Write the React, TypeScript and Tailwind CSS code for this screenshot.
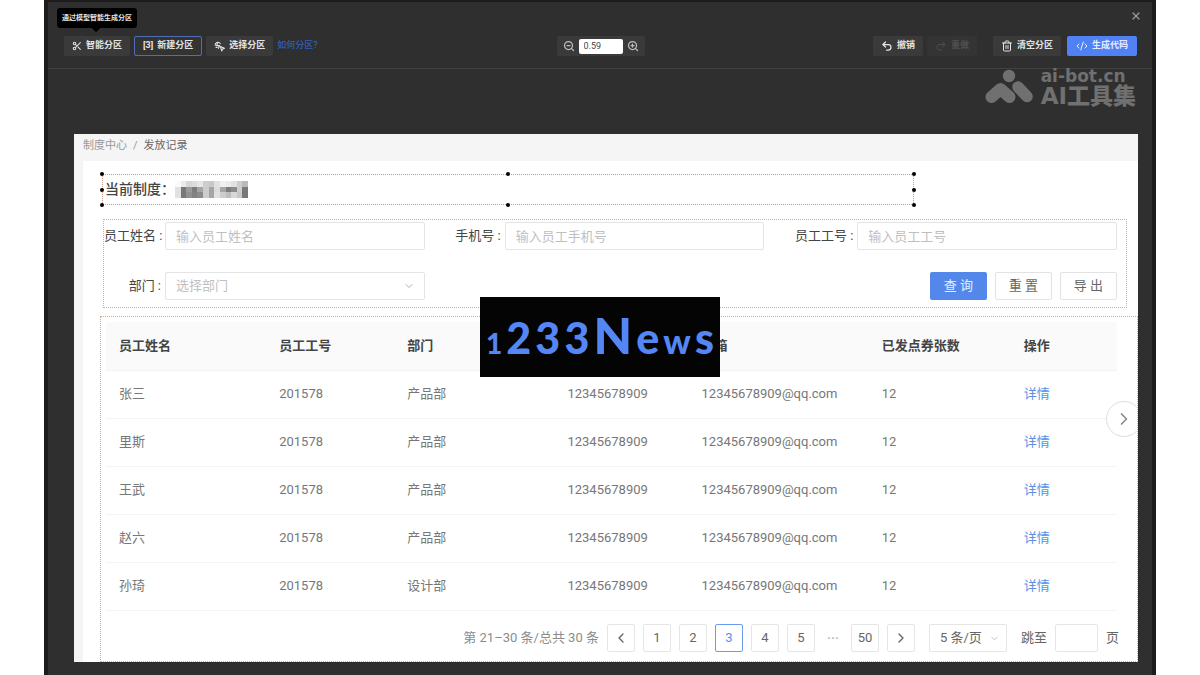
import * as React from 'react';
import { ChevronDown, ChevronLeft, ChevronRight, CodeXml, Redo2, Scissors, Trash2, Undo2, X, ZoomIn, ZoomOut } from 'lucide-react';

const COLUMNS = [
    { key: 'name', title: '员工姓名', width: 'w-[160px]' },
    { key: 'number', title: '员工工号', width: 'w-[128px]' },
    { key: 'department', title: '部门', width: 'w-[160px]' },
    { key: 'phone', title: '', width: 'w-[134px]' },
    { key: 'email', title: '邮箱', width: 'w-[180px]' },
    { key: 'coupons', title: '已发点券张数', width: 'w-[142px]' },
    { key: 'action', title: '操作', width: 'w-[106px]' },
];

const ROWS = [
    { name: '张三', department: '产品部' },
    { name: '里斯', department: '产品部' },
    { name: '王武', department: '产品部' },
    { name: '赵六', department: '产品部' },
    { name: '孙琦', department: '设计部' },
];

const HANDLES = [
    '-left-[3px] -top-[3px]',
    'left-1/2 -ml-[2px] -top-[3px]',
    '-right-[3px] -top-[3px]',
    '-left-[3px] top-1/2 -mt-[2px]',
    '-right-[3px] top-1/2 -mt-[2px]',
    '-left-[3px] -bottom-[3px]',
    'left-1/2 -ml-[2px] -bottom-[3px]',
    '-right-[3px] -bottom-[3px]',
];

// grey levels of the masked policy name, one list per row of blocks
const MASK = [
    [250, 235, 215, 220, 230, 205, 200, 225, 240, 235, 225, 205, 185],
    [225, 120, 155, 125, 165, 205, 165, 220, 165, 125, 140, 205, 120],
    [225, 120, 145, 130, 140, 205, 165, 225, 205, 190, 215, 200, 120],
];

const FIELD = 'h-7 w-full min-w-0 rounded-[2px] border border-[#e4e4e4] bg-white px-[10px] text-[13px] outline-none placeholder:text-[#bfbfbf]';

interface ToolButtonProps {
    children: React.ReactNode;
    className?: string;
    disabled?: boolean;
}

const ToolButton: React.FC<ToolButtonProps> = ({ children, className = 'bg-[#3a3a3a] px-2 text-[#e4e4e4]', disabled = false }) => (
    <button type="button" disabled={disabled} className={`flex h-5 items-center gap-1 rounded-[2px] text-[9px] font-bold whitespace-nowrap ${className}`}>
        {children}
    </button>
);

const SelectIcon = () => (
    <svg viewBox="0 0 12 12" className="size-[11px]" fill="none" stroke="currentColor" strokeWidth="1.2" strokeLinecap="round" strokeLinejoin="round" aria-hidden="true">
        <path d="M3.400 7H2.200M1.300 4.800A3 3 0 0 1 6.800 2.800" />
        <path d="M4.200 1.500L2.800 5h3.400L4.800 8" />
        <path d="M7 6l1.400 4.800 1-2 2-.9z" />
    </svg>
);

const WatermarkLogo = () => (
    <svg viewBox="0 0 48 36" className="h-9 w-12" fill="none" stroke="#707070" strokeWidth="12" strokeLinecap="round" strokeLinejoin="round" aria-hidden="true">
        <circle cx="24" cy="8" r="6.200" fill="#707070" stroke="none" />
        <path d="M6.500 29L15.500 21L24.500 29" />
        <path d="M33 19l9 9.500" strokeWidth="11.500" />
    </svg>
);

const Toolbar = () => (
    <header className="relative grid grid-cols-[1fr_auto_1fr] items-center border-b border-[#414141] pt-[34px] pr-[15px] pb-3 pl-4">
        <div className="flex items-center gap-1">
            <div className="relative">
                <ToolButton>
                    <Scissors className="size-[10px]" strokeWidth={2.5} />
                    智能分区
                </ToolButton>
                <div role="tooltip" className="absolute bottom-7 -left-[7px] flex h-5 items-center rounded-[3px] bg-black px-[5px] text-[7px] font-bold whitespace-nowrap text-[#e4e4e4]">
                    通过模型智能生成分区
                    <span className="absolute top-[17px] left-9 size-[6px] rotate-45 bg-black" />
                </div>
            </div>
            <ToolButton className="border border-[#4f6fb5] bg-[#333] px-2 text-[#e4e4e4]">
                <span>[3]</span>
                新建分区
            </ToolButton>
            <ToolButton>
                <SelectIcon />
                选择分区
            </ToolButton>
            <a href="#help" className="text-[9px] font-medium text-[#2f5fb8]">如何分区?</a>
        </div>

        <div className="flex h-5 items-center gap-1 rounded-[2px] bg-[#3a3a3a] px-[6px] text-[#bdbdbd]">
            <button type="button" aria-label="缩小">
                <ZoomOut className="size-3" strokeWidth={2.5} />
            </button>
            <input aria-label="缩放比例" defaultValue="0.59" className="h-[15px] w-11 rounded-[2px] bg-white px-[5px] text-[9px] text-[#444] outline-none" />
            <button type="button" aria-label="放大">
                <ZoomIn className="size-3" strokeWidth={2.5} />
            </button>
        </div>

        <div className="flex items-center justify-end gap-1">
            <ToolButton>
                <Undo2 className="size-3" strokeWidth={2.5} />
                撤销
            </ToolButton>
            <ToolButton disabled className="bg-[#343434] px-2 text-[#505050]">
                <Redo2 className="size-3" />
                重做
            </ToolButton>
            <div className="ml-3 flex items-center gap-[6px]">
                <ToolButton>
                    <Trash2 className="size-3" />
                    清空分区
                </ToolButton>
                <ToolButton className="bg-[#5182f5] px-[9px] text-[#e6edff]">
                    <CodeXml className="size-3" />
                    生成代码
                </ToolButton>
            </div>
        </div>

        <button type="button" aria-label="关闭" className="absolute top-2 right-[10px] text-[#9a9a9a]">
            <X className="size-3" strokeWidth={2.5} />
        </button>
    </header>
);

const Watermark = () => (
    <div className="absolute top-[66px] right-4 flex items-start gap-2 font-['DejaVu_Sans','Noto_Sans_CJK_SC',sans-serif] font-bold text-[#707070]">
        <WatermarkLogo />
        <div>
            <div className="text-[17px] leading-[17px]">ai-bot.cn</div>
            <div className="text-[23px] leading-[22px] font-black">AI工具集</div>
        </div>
    </div>
);

const PolicyTitle = () => (
    <div className="relative mt-[13px] ml-[19px] flex h-[31px] w-[77%] items-center border border-dotted border-[#c09a8a] pl-[2px]">
        <h1 className="text-[14px] font-medium text-[#444]">当前制度：</h1>
        <svg viewBox="0 0 13 3" preserveAspectRatio="none" shapeRendering="crispEdges" className="h-[17px] w-[73px]" aria-hidden="true">
            {MASK.map((row, y) => row.map((level, x) => (
                <rect key={`${x}-${y}`} x={x} y={y} width="1" height="1" fill={`rgb(${level},${level},${level})`} />
            )))}
        </svg>
        {HANDLES.map((position) => (
            <span key={position} className={`absolute size-1 rounded-full bg-black ${position}`} />
        ))}
    </div>
);

const Filters = () => (
    <form className="mt-[14px] mr-[11px] ml-5 grid grid-cols-[61px_1fr_80px_1fr_93px_1fr] items-center gap-y-[22px] border border-dotted border-[#eda67c] pt-[2px] pr-[9px] pb-[7px] text-[13px] text-[#444]">
        <label htmlFor="name" className="pr-1 text-right whitespace-nowrap">员工姓名 :</label>
        <input id="name" placeholder="输入员工姓名" className={`${FIELD} text-[#555]`} />
        <label htmlFor="phone" className="pr-1 text-right">手机号 :</label>
        <input id="phone" placeholder="输入员工手机号" className={`${FIELD} text-[#555]`} />
        <label htmlFor="number" className="pr-1 text-right">员工工号 :</label>
        <input id="number" placeholder="输入员工工号" className={`${FIELD} text-[#555]`} />
        <label htmlFor="department" className="pr-1 text-right">部门 :</label>
        <div className="relative">
            <select id="department" className={`${FIELD} appearance-none text-[#bfbfbf]`}>
                <option>选择部门</option>
            </select>
            <ChevronDown className="pointer-events-none absolute top-2 right-[10px] size-3 text-[#b0b0b0]" />
        </div>
        <div className="col-span-4 flex justify-end gap-2">
            <button type="button" className="h-7 w-[57px] rounded-[2px] bg-[#5388ea] text-[#e4edff]">查 询</button>
            <button type="button" className="h-7 w-[57px] rounded-[2px] border border-[#e2e2e2] text-[#666]">重 置</button>
            <button type="button" className="h-7 w-[57px] rounded-[2px] border border-[#e2e2e2] text-[#666]">导 出</button>
        </div>
    </form>
);

const PAGE_BUTTON = 'flex size-7 items-center justify-center rounded-[2px] border';

const Pagination = () => (
    <nav aria-label="分页" className="mt-[13px] mr-[18px] mb-[9px] flex items-center justify-end gap-2 text-[13px] text-[#666]">
        <span className="text-[#8c8c8c]">第 21–30 条/总共 30 条</span>
        <button type="button" aria-label="上一页" className={`${PAGE_BUTTON} border-[#e6e6e6]`}>
            <ChevronLeft className="size-4" />
        </button>
        {[1, 2, 3, 4, 5].map((page) => (
            <button key={page} type="button" className={`${PAGE_BUTTON} ${page === 3 ? 'border-[#6a9bee] text-[#5b90ee]' : 'border-[#e6e6e6]'}`}>
                {page}
            </button>
        ))}
        <span className="w-5 text-center font-bold text-[#c0c0c0]">···</span>
        <button type="button" className={`${PAGE_BUTTON} border-[#e6e6e6]`}>50</button>
        <button type="button" aria-label="下一页" className={`${PAGE_BUTTON} border-[#e6e6e6]`}>
            <ChevronRight className="size-4" />
        </button>
        <div className="relative ml-[6px]">
            <select aria-label="每页条数" className="h-7 w-[78px] appearance-none rounded-[2px] border border-[#e6e6e6] bg-white px-[10px]">
                <option>5 条/页</option>
            </select>
            <ChevronDown className="pointer-events-none absolute top-[9px] right-[7px] size-[11px] text-[#bfbfbf]" />
        </div>
        <label htmlFor="jump" className="ml-[6px]">跳至</label>
        <input id="jump" className="h-7 w-[43px] rounded-[2px] border border-[#e6e6e6] px-2 outline-none" />
        <span>页</span>
    </nav>
);

const Records = () => (
    <section className="relative mt-2 ml-[17px] overflow-hidden border border-dotted border-[#eda67c] pt-[5px] pl-[5px]">
        <div className="mr-5">
            <table className="w-full table-fixed text-left text-[13px] text-[#777]">
                <thead className="bg-[#fafafa] text-[#444]">
                    <tr className="h-12 border-b border-[#f4f4f4]">
                        {COLUMNS.map((column) => (
                            <th key={column.key} className={`pl-[13px] font-bold ${column.width}`}>{column.title}</th>
                        ))}
                    </tr>
                </thead>
                <tbody>
                    {ROWS.map((row) => (
                        <tr key={row.name} className="h-12 border-b border-[#f4f4f4]">
                            <td className="pl-[13px]">{row.name}</td>
                            <td className="pl-[13px]">201578</td>
                            <td className="pl-[13px]">{row.department}</td>
                            <td className="pl-[13px]">12345678909</td>
                            <td className="pl-[13px]">12345678909@qq.com</td>
                            <td className="pl-[13px]">12</td>
                            <td className="pl-[13px]">
                                <a href="#detail" className="text-[#5b90e4]">详情</a>
                            </td>
                        </tr>
                    ))}
                </tbody>
            </table>
        </div>
        <Pagination />
        <button type="button" aria-label="下一张" className="absolute top-[84px] -right-[5px] flex size-9 items-center justify-center rounded-full border border-[#dedede] bg-white text-[#8a8a8a]">
            <ChevronRight className="size-5" />
        </button>
    </section>
);

const Banner = () => (
    <div className="absolute top-[297px] left-1/2 flex h-20 w-60 -translate-x-1/2 items-baseline justify-between bg-[#040404] px-[6px] pt-[6px] font-['Lato',sans-serif] leading-[64px] font-black text-[#5586f5]">
        <span className="text-[28px]">1</span>
        <span className="text-[43px]">2</span>
        <span className="text-[43px]">3</span>
        <span className="text-[43px]">3</span>
        <span className="text-[50px]">N</span>
        <span className="text-[43px]">e</span>
        <span className="text-[34px]">w</span>
        <span className="text-[43px]">s</span>
    </div>
);

export default function App() {
    return (
        <div className="relative min-h-screen bg-white px-11 font-['Roboto','Noto_Sans_CJK_SC',sans-serif]">
            <div className="relative min-h-screen border-x-4 border-t-2 border-[#1c1c1c] bg-[#2f2f2f]">
                <Toolbar />
                <Watermark />
                <main className="mt-[65px] mr-[14px] ml-[26px] bg-[#f5f5f5] pl-[9px]">
                    <nav aria-label="位置" className="flex h-[27px] items-center gap-[6px] pb-[2px] text-[11px] text-[#999]">
                        <a href="#center">制度中心</a>
                        <span>/</span>
                        <span className="text-[#666]">发放记录</span>
                    </nav>
                    <div className="flow-root bg-white">
                        <PolicyTitle />
                        <Filters />
                        <Records />
                    </div>
                </main>
            </div>
            <Banner />
        </div>
    );
}
